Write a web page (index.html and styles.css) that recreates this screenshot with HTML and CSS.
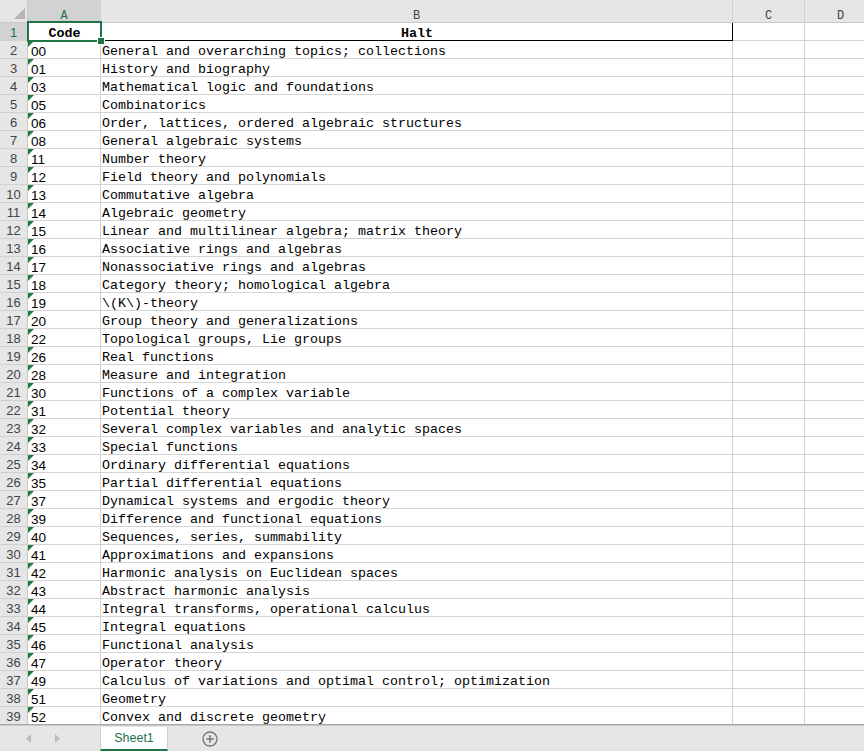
FILE: index.html
```html
<!DOCTYPE html>
<html>
<head>
<meta charset="utf-8">
<link rel="stylesheet" href="styles.css">
</head>
<body>
<div class="app">
  <div class="sheet">
    <div class="hdr">
      <div class="corner"><div class="sel-all"></div></div>
      <div class="hh ha sel">A</div>
      <div class="hh hb">B</div>
      <div class="hh hc">C</div>
      <div class="hh hd">D</div>
    </div>
    <div class="row">
      <div class="rh sel">1</div>
      <div class="c ca head"><span class="selbox"><span class="handle"></span></span>Code</div>
      <div class="c cb head hb1">Halt</div>
      <div class="c cc"></div>
      <div class="c cd"></div>
    </div>
    <div class="row"><div class="rh">2</div><div class="c ca num">00</div><div class="c cb">General and overarching topics; collections</div><div class="c cc"></div><div class="c cd"></div></div>
    <div class="row"><div class="rh">3</div><div class="c ca num">01</div><div class="c cb">History and biography</div><div class="c cc"></div><div class="c cd"></div></div>
    <div class="row"><div class="rh">4</div><div class="c ca num">03</div><div class="c cb">Mathematical logic and foundations</div><div class="c cc"></div><div class="c cd"></div></div>
    <div class="row"><div class="rh">5</div><div class="c ca num">05</div><div class="c cb">Combinatorics</div><div class="c cc"></div><div class="c cd"></div></div>
    <div class="row"><div class="rh">6</div><div class="c ca num">06</div><div class="c cb">Order, lattices, ordered algebraic structures</div><div class="c cc"></div><div class="c cd"></div></div>
    <div class="row"><div class="rh">7</div><div class="c ca num">08</div><div class="c cb">General algebraic systems</div><div class="c cc"></div><div class="c cd"></div></div>
    <div class="row"><div class="rh">8</div><div class="c ca num">11</div><div class="c cb">Number theory</div><div class="c cc"></div><div class="c cd"></div></div>
    <div class="row"><div class="rh">9</div><div class="c ca num">12</div><div class="c cb">Field theory and polynomials</div><div class="c cc"></div><div class="c cd"></div></div>
    <div class="row"><div class="rh">10</div><div class="c ca num">13</div><div class="c cb">Commutative algebra</div><div class="c cc"></div><div class="c cd"></div></div>
    <div class="row"><div class="rh">11</div><div class="c ca num">14</div><div class="c cb">Algebraic geometry</div><div class="c cc"></div><div class="c cd"></div></div>
    <div class="row"><div class="rh">12</div><div class="c ca num">15</div><div class="c cb">Linear and multilinear algebra; matrix theory</div><div class="c cc"></div><div class="c cd"></div></div>
    <div class="row"><div class="rh">13</div><div class="c ca num">16</div><div class="c cb">Associative rings and algebras</div><div class="c cc"></div><div class="c cd"></div></div>
    <div class="row"><div class="rh">14</div><div class="c ca num">17</div><div class="c cb">Nonassociative rings and algebras</div><div class="c cc"></div><div class="c cd"></div></div>
    <div class="row"><div class="rh">15</div><div class="c ca num">18</div><div class="c cb">Category theory; homological algebra</div><div class="c cc"></div><div class="c cd"></div></div>
    <div class="row"><div class="rh">16</div><div class="c ca num">19</div><div class="c cb">\(K\)-theory</div><div class="c cc"></div><div class="c cd"></div></div>
    <div class="row"><div class="rh">17</div><div class="c ca num">20</div><div class="c cb">Group theory and generalizations</div><div class="c cc"></div><div class="c cd"></div></div>
    <div class="row"><div class="rh">18</div><div class="c ca num">22</div><div class="c cb">Topological groups, Lie groups</div><div class="c cc"></div><div class="c cd"></div></div>
    <div class="row"><div class="rh">19</div><div class="c ca num">26</div><div class="c cb">Real functions</div><div class="c cc"></div><div class="c cd"></div></div>
    <div class="row"><div class="rh">20</div><div class="c ca num">28</div><div class="c cb">Measure and integration</div><div class="c cc"></div><div class="c cd"></div></div>
    <div class="row"><div class="rh">21</div><div class="c ca num">30</div><div class="c cb">Functions of a complex variable</div><div class="c cc"></div><div class="c cd"></div></div>
    <div class="row"><div class="rh">22</div><div class="c ca num">31</div><div class="c cb">Potential theory</div><div class="c cc"></div><div class="c cd"></div></div>
    <div class="row"><div class="rh">23</div><div class="c ca num">32</div><div class="c cb">Several complex variables and analytic spaces</div><div class="c cc"></div><div class="c cd"></div></div>
    <div class="row"><div class="rh">24</div><div class="c ca num">33</div><div class="c cb">Special functions</div><div class="c cc"></div><div class="c cd"></div></div>
    <div class="row"><div class="rh">25</div><div class="c ca num">34</div><div class="c cb">Ordinary differential equations</div><div class="c cc"></div><div class="c cd"></div></div>
    <div class="row"><div class="rh">26</div><div class="c ca num">35</div><div class="c cb">Partial differential equations</div><div class="c cc"></div><div class="c cd"></div></div>
    <div class="row"><div class="rh">27</div><div class="c ca num">37</div><div class="c cb">Dynamical systems and ergodic theory</div><div class="c cc"></div><div class="c cd"></div></div>
    <div class="row"><div class="rh">28</div><div class="c ca num">39</div><div class="c cb">Difference and functional equations</div><div class="c cc"></div><div class="c cd"></div></div>
    <div class="row"><div class="rh">29</div><div class="c ca num">40</div><div class="c cb">Sequences, series, summability</div><div class="c cc"></div><div class="c cd"></div></div>
    <div class="row"><div class="rh">30</div><div class="c ca num">41</div><div class="c cb">Approximations and expansions</div><div class="c cc"></div><div class="c cd"></div></div>
    <div class="row"><div class="rh">31</div><div class="c ca num">42</div><div class="c cb">Harmonic analysis on Euclidean spaces</div><div class="c cc"></div><div class="c cd"></div></div>
    <div class="row"><div class="rh">32</div><div class="c ca num">43</div><div class="c cb">Abstract harmonic analysis</div><div class="c cc"></div><div class="c cd"></div></div>
    <div class="row"><div class="rh">33</div><div class="c ca num">44</div><div class="c cb">Integral transforms, operational calculus</div><div class="c cc"></div><div class="c cd"></div></div>
    <div class="row"><div class="rh">34</div><div class="c ca num">45</div><div class="c cb">Integral equations</div><div class="c cc"></div><div class="c cd"></div></div>
    <div class="row"><div class="rh">35</div><div class="c ca num">46</div><div class="c cb">Functional analysis</div><div class="c cc"></div><div class="c cd"></div></div>
    <div class="row"><div class="rh">36</div><div class="c ca num">47</div><div class="c cb">Operator theory</div><div class="c cc"></div><div class="c cd"></div></div>
    <div class="row"><div class="rh">37</div><div class="c ca num">49</div><div class="c cb">Calculus of variations and optimal control; optimization</div><div class="c cc"></div><div class="c cd"></div></div>
    <div class="row"><div class="rh">38</div><div class="c ca num">51</div><div class="c cb">Geometry</div><div class="c cc"></div><div class="c cd"></div></div>
    <div class="row"><div class="rh">39</div><div class="c ca num">52</div><div class="c cb">Convex and discrete geometry</div><div class="c cc"></div><div class="c cd"></div></div>
  </div>
  <div class="tabbar">
    <div class="nav">
      <span class="arrow left"></span>
      <span class="arrow right"></span>
    </div>
    <div class="tab">Sheet1</div>
    <div class="add">
      <svg width="16" height="16" viewBox="0 0 16 16"><circle cx="8" cy="8" r="7" fill="none" stroke="#7a7a7a" stroke-width="1.4"/><path d="M8 4.2v7.6M4.2 8h7.6" stroke="#7a7a7a" stroke-width="1.6"/></svg>
    </div>
  </div>
</div>
</body>
</html>
```

FILE: styles.css
```css
html, body {
  margin: 0;
  padding: 0;
  background: #ffffff;
  overflow: hidden;
}
.app {
  width: 864px;
  height: 751px;
  display: flex;
  flex-direction: column;
  overflow: hidden;
}
.sheet {
  flex: 0 0 725px;
  overflow: hidden;
  box-sizing: border-box;
  border-bottom: 1px solid #a8a8a8;
}
.hdr {
  display: flex;
  height: 23px;
}
.corner {
  flex: 0 0 28px;
  box-sizing: border-box;
  height: 23px;
  background: #e6e6e6;
  border-right: 1px solid #c8c8c8;
  border-bottom: 1px solid #c8c8c8;
  display: flex;
  justify-content: flex-end;
  align-items: flex-end;
  padding: 0 2px 3px 0;
}
.sel-all {
  width: 11px;
  height: 11px;
  background: #b5b5b5;
  clip-path: polygon(100% 0, 100% 100%, 0 100%);
}
.hh {
  box-sizing: border-box;
  height: 23px;
  background: #e6e6e6;
  border-right: 1px solid #d0d0d0;
  border-bottom: 1px solid #c8c8c8;
  text-align: center;
  font-family: "Liberation Mono", monospace;
  font-size: 12px;
  line-height: 18px;
  padding-top: 7px;
  color: #444;
  flex-shrink: 0;
  overflow: hidden;
}
.hh.sel {
  background: #d2d2d2;
  color: #217346;
}
.ha { width: 73px; }
.hb { width: 632px; }
.hc { width: 72px; }
.hd { width: 72px; }
.row {
  display: flex;
  height: 18px;
}
.rh {
  flex: 0 0 28px;
  box-sizing: border-box;
  height: 18px;
  background: #e6e6e6;
  border-right: 1px solid #c8c8c8;
  border-bottom: 1px solid #d0d0d0;
  text-align: center;
  font-family: "Liberation Sans", Arial, sans-serif;
  font-size: 13px;
  line-height: 19px;
  color: #444;
}
.rh.sel {
  background: #d2d2d2;
  color: #217346;
}
.c {
  box-sizing: border-box;
  height: 18px;
  flex-shrink: 0;
  border-right: 1px solid #d4d4d4;
  border-bottom: 1px solid #d4d4d4;
  font-family: "Liberation Mono", monospace;
  font-size: 13.33px;
  line-height: 21px;
  color: #000;
  white-space: nowrap;
  position: relative;
  padding-left: 1px;
}
.ca { width: 73px; }
.cb { width: 632px; }
.cc { width: 72px; }
.cd { width: 72px; }
.num {
  font-family: "Liberation Sans", Arial, sans-serif;
  font-size: 13.5px;
  padding-left: 3px;
}
.num::before {
  content: "";
  position: absolute;
  left: 0;
  top: 0;
  width: 6px;
  height: 6px;
  background: #1f7a3f;
  clip-path: polygon(0 0, 100% 0, 0 100%);
}
.head {
  font-weight: bold;
  text-align: center;
  border-bottom-color: #000;
  border-right-color: #000;
}
.hb1 {
  border-right-color: #000;
}
.selbox {
  position: absolute;
  left: -1px;
  top: -2px;
  right: -2px;
  bottom: -2px;
  border: 2px solid #217346;
  z-index: 2;
}
.handle {
  position: absolute;
  right: -4px;
  bottom: -4px;
  width: 6px;
  height: 6px;
  background: #217346;
  border: 1px solid #fff;
  box-sizing: content-box;
  margin: -1px;
}
.tabbar {
  flex: 1;
  background: #e6e6e6;
  display: flex;
  align-items: stretch;
  border-top: 1px solid #c8c8c8;
}
.nav {
  flex: 0 0 100px;
  display: flex;
  align-items: center;
  padding-left: 26px;
  box-sizing: border-box;
  gap: 24px;
}
.arrow {
  width: 5px;
  height: 9px;
  background: #bcbcbc;
}
.arrow.left { clip-path: polygon(100% 0, 100% 100%, 0 50%); }
.arrow.right { clip-path: polygon(0 0, 0 100%, 100% 50%); }
.tab {
  flex: 0 0 68px;
  box-sizing: border-box;
  background: #fff;
  margin-top: 1px;
  border-left: 1px solid #d0d0d0;
  border-right: 1px solid #d0d0d0;
  border-bottom: 2px solid #217346;
  color: #217346;
  font-family: "Liberation Sans", Arial, sans-serif;
  font-size: 12.5px;
  text-align: center;
  line-height: 22px;
}
.add {
  display: flex;
  align-items: center;
  padding-left: 34px;
}
.add svg { display: block; }
```
